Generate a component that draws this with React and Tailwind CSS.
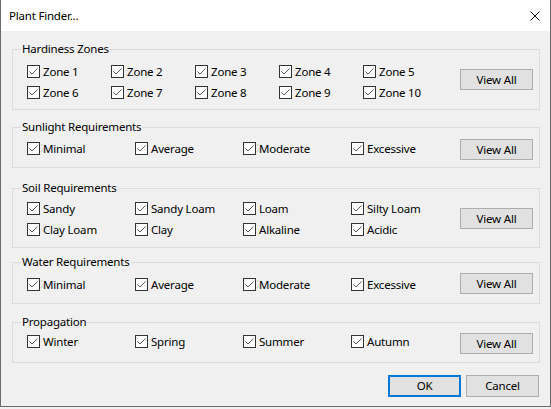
import React from "react";

const font = { fontFamily: '"Noto Sans", "Open Sans", sans-serif' };

const groups = [
  {
    title: "Hardiness Zones",
    cols: "grid-cols-[repeat(5,84px)]",
    items: ["Zone 1", "Zone 2", "Zone 3", "Zone 4", "Zone 5", "Zone 6", "Zone 7", "Zone 8", "Zone 9", "Zone 10"],
    box: "mt-[18px] h-[61px]",
    grid: "mt-[4px]",
    btn: "mt-[12px]",
  },
  {
    title: "Sunlight Requirements",
    cols: "grid-cols-[repeat(4,108px)]",
    items: ["Minimal", "Average", "Moderate", "Excessive"],
    box: "mt-[17px] h-[41px]",
    grid: "mt-[3px]",
    btn: "mt-[4px]",
  },
  {
    title: "Soil Requirements",
    cols: "grid-cols-[repeat(4,108px)]",
    items: ["Sandy", "Sandy Loam", "Loam", "Silty Loam", "Clay Loam", "Clay", "Alkaline", "Acidic"],
    box: "mt-[20px] h-[60px]",
    grid: "mt-[2px]",
    btn: "mt-[12px]",
  },
  {
    title: "Water Requirements",
    cols: "grid-cols-[repeat(4,108px)]",
    items: ["Minimal", "Average", "Moderate", "Excessive"],
    box: "mt-[14px] h-[42px]",
    grid: "mt-[4px]",
    btn: "mt-[3px]",
  },
  {
    title: "Propagation",
    cols: "grid-cols-[repeat(4,108px)]",
    items: ["Winter", "Spring", "Summer", "Autumn"],
    box: "mt-[18px] h-[41px]",
    grid: "mt-[1px]",
    btn: "mt-[3px]",
  },
];

function CheckBox({ label }) {
  return (
    <label className="flex items-center gap-[3px] h-[21px] text-black">
      <span className="w-[13px] h-[13px] border border-[#333333] bg-white flex items-center justify-center">
        <svg width="11" height="11" viewBox="0 0 11 11">
          <polyline points="1.5,5.5 4,8 9.5,2.5" fill="none" stroke="#444444" strokeWidth="0.9" />
        </svg>
      </span>
      <span className="leading-[16px]">{label}</span>
    </label>
  );
}

function Button({ children, primary, className = "" }) {
  return (
    <button
      className={
        "w-[73px] text-black bg-[#e1e1e1] " +
        (primary ? "border-2 border-[#0078d7] " : "border border-[#adadad] ") +
        className
      }
    >
      {children}
    </button>
  );
}

function Group({ group }) {
  return (
    <div className={"mx-[11px] mr-[10px] border border-[#dcdcdc] " + group.box}>
      <span className="block w-fit -mt-[9px] ml-[8px] px-[1px] bg-[#f0f0f0] leading-[16px] text-black">
        {group.title}
      </span>
      <div className="flex items-start justify-between">
        <div className={"grid pl-[14px] " + group.cols + " " + group.grid}>
          {group.items.map((item) => (
            <CheckBox key={item} label={item} />
          ))}
        </div>
        <Button className={"h-[21px] mr-[6px] " + group.btn}>View All</Button>
      </div>
    </div>
  );
}

export default function App() {
  return (
    <div className="w-[551px] h-[409px] bg-[#f0f0f0] text-[11.5px] tracking-[-0.2px]" style={font}>
      <div className="h-[407px] border-x border-b border-[#6b6b6b] bg-[#f0f0f0] flex flex-col">
        <div className="h-[31px] bg-white flex items-center justify-between pl-[8px] pr-[10px]">
          <span className="text-black">Plant Finder...</span>
          <svg width="10" height="10" viewBox="0 0 10 10">
            <path d="M0.5 0.5 L9.5 9.5 M9.5 0.5 L0.5 9.5" stroke="#111111" strokeWidth="1" />
          </svg>
        </div>
        {groups.map((g) => (
          <Group key={g.title} group={g} />
        ))}
        <div className="flex justify-end gap-[5px] mt-[12px] mr-[11px]">
          <Button primary className="h-[22px]">OK</Button>
          <Button className="h-[22px]">Cancel</Button>
        </div>
      </div>
    </div>
  );
}
